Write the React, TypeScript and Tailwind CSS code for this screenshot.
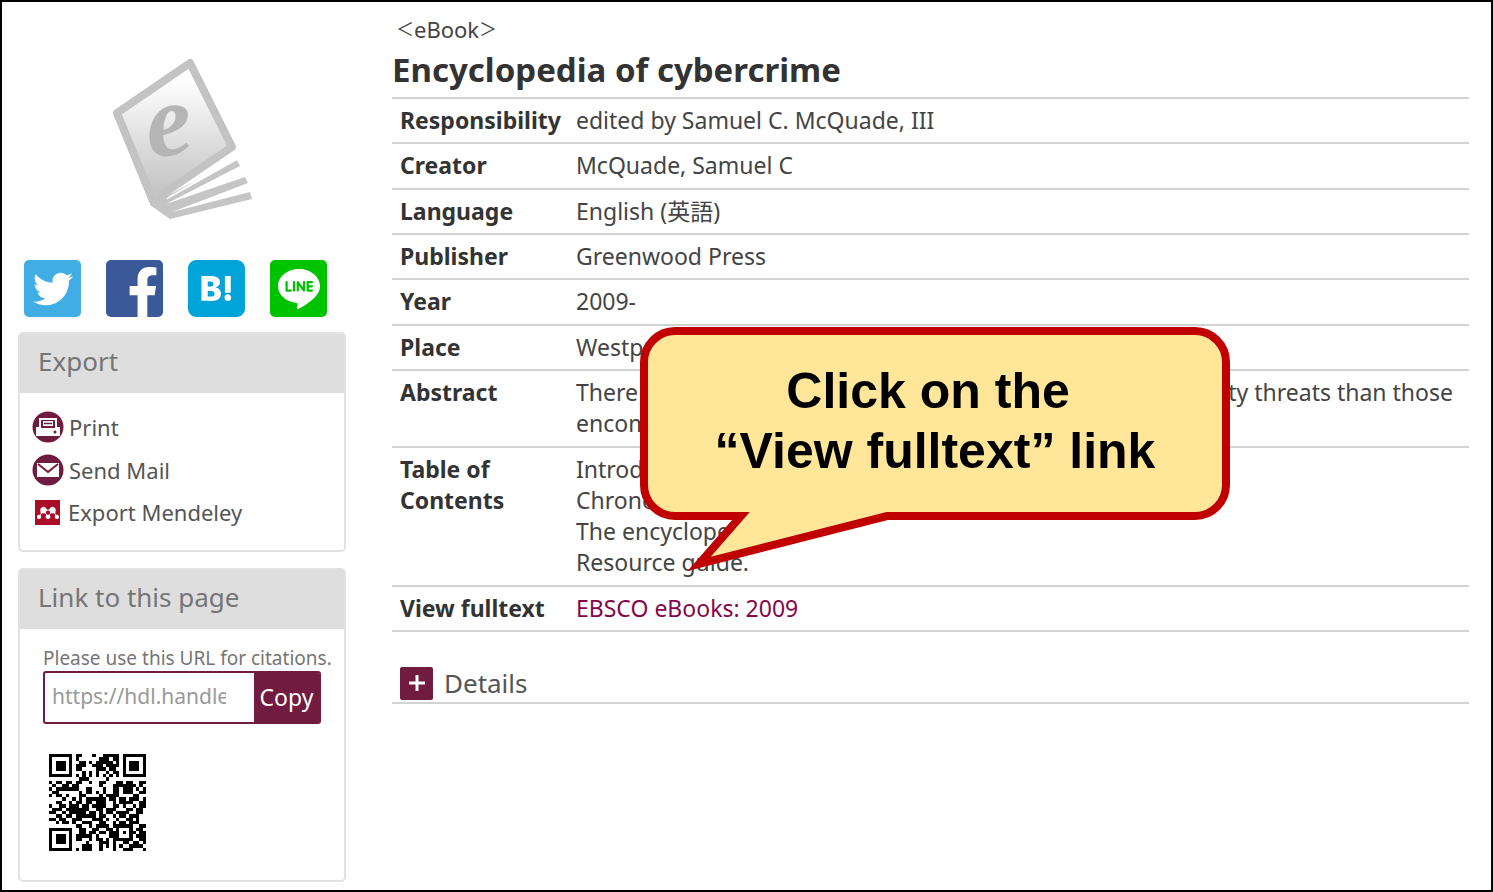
import { useState } from 'react';
import type { ReactNode } from 'react';
import { FaFacebookF, FaTwitter } from 'react-icons/fa';
import { SiHatenabookmark, SiLine, SiMendeley } from 'react-icons/si';

type Field = {
    label: string;
    value: ReactNode;
};

const fields: Field[] = [
    { label: 'Responsibility', value: 'edited by Samuel C. McQuade, III' },
    { label: 'Creator', value: 'McQuade, Samuel C' },
    { label: 'Language', value: 'English (英語)' },
    { label: 'Publisher', value: 'Greenwood Press' },
    { label: 'Year', value: '2009-' },
    { label: 'Place', value: 'Westport' },
    {
        label: 'Abstract',
        value: (
            <>
                <span className="flex justify-between">
                    <span>There are</span>
                    <span className="pr-2">security threats than those</span>
                </span>
                <span>encompassed</span>
            </>
        ),
    },
    {
        label: 'Table of Contents',
        value: (
            <>
                Introduction.<br />
                Chronology.<br />
                The encyclopedia.<br />
                Resource guide.
            </>
        ),
    },
    {
        label: 'View fulltext',
        value: <a href="#fulltext" className="text-[#85064a]">EBSCO eBooks: 2009</a>,
    },
];

const qrRows = [
    '11111110110001001111101111111',
    '10000010100000011101101000001',
    '10111010011010111110101011101',
    '10111010111001110111101011101',
    '10111010110000111011001011101',
    '10000010001010100101101000001',
    '11111110101010101010101111111',
    '00000000011100000100000000000',
    '10110110110010011000110110011',
    '01001101100000010001111111010',
    '10111111100110001001101110101',
    '01100000010110101001101110011',
    '10110100011000010111100001100',
    '00001001010111111011011011101',
    '00110010110110111001011110011',
    '10011011101101111001101001011',
    '01110111111100110111000110110',
    '11001011111011010110111100110',
    '00110110111111011001011011100',
    '11011001110001110100100110100',
    '00101101001110011001011011100',
    '00000000110010111101111110011',
    '11111110011001100110100010110',
    '10000010011011011011101011011',
    '10111010111110100011100010111',
    '10111010110010110101111110011',
    '10111010000100011101001101101',
    '10000010001110010101010011110',
    '11111110101110010001001110001',
];

function QrCode() {
    return (
        <svg viewBox="0 0 29 29" className="size-[97px]" shapeRendering="crispEdges" role="img" aria-label="QR code">
            {qrRows.map((row, y) =>
                row.split('').map((cell, x) =>
                    cell === '1' ? <rect key={`${x}-${y}`} x={x} y={y} width="1" height="1" /> : null
                )
            )}
        </svg>
    );
}

function BookCover() {
    return (
        <svg viewBox="0 0 190 200" className="h-[200px] w-[190px]" role="img" aria-label="eBook">
            <defs>
                <linearGradient id="cover" x1="0" y1="0" x2="0" y2="1">
                    <stop offset="0.15" stopColor="#fdfdfd" />
                    <stop offset="0.9" stopColor="#c6c6c6" />
                </linearGradient>
            </defs>
            <path
                d="M60 158L80 154L147 120L150 126L76 164L155 137L158 143L82 172L160 152L162 159L80 179L60 165Z"
                fill="#c5c5c5"
            />
            <path
                d="M27 73L100 23L142 107L73 154L63 161Z"
                fill="url(#cover)"
                stroke="#c3c3c3"
                strokeWidth="8"
                strokeLinejoin="round"
            />
            <path d="M78 157L147 117L149 119L76 160Z" fill="#fff" />
            <text
                x="56"
                y="115"
                fontSize="104"
                fontWeight="700"
                fontStyle="italic"
                fill="#b5b5b5"
                transform="rotate(-8 80 90)"
                className="font-['Liberation_Serif',serif]"
            >
                e
            </text>
        </svg>
    );
}

function PrintIcon() {
    return (
        <svg viewBox="0 0 32 32" className="size-8" aria-hidden="true">
            <circle cx="16" cy="16" r="15.5" fill="#701b3f" />
            <path d="M7 7h18v9h3v9H4v-9h3z" fill="#fff" />
            <path d="M9 9h14v8H9z" fill="#701b3f" />
            <path d="M11 10h10v5H11z" fill="#fff" />
            <path d="M12 12.500h8" stroke="#701b3f" strokeWidth="1.5" />
            <circle cx="23" cy="21" r="1.500" fill="#701b3f" />
        </svg>
    );
}

function MailIcon() {
    return (
        <svg viewBox="0 0 32 32" className="size-8" aria-hidden="true">
            <circle cx="16" cy="16" r="15.5" fill="#701b3f" />
            <path d="M5 9h22v14H5z" fill="#fff" />
            <path d="M6 10l10 8 10-8" fill="none" stroke="#701b3f" strokeWidth="2" />
        </svg>
    );
}

function Card({ title, children }: { title: string; children: ReactNode }) {
    return (
        <section className="rounded-[5px] border-2 border-[#e2e2e2] bg-white">
            <h2 className="bg-[#dedede] px-[18px] pt-[10px] pb-[15px] text-[26px] leading-[34px] text-[#757575]">{title}</h2>
            {children}
        </section>
    );
}

function Callout() {
    return (
        <div className="absolute top-[325px] left-[638px] h-[250px] w-[590px]">
            <svg viewBox="0 0 590 250" className="absolute inset-0 size-full overflow-visible" aria-hidden="true">
                <path
                    d="M35 4H555A31 31 0 0 1 586 35V158A31 31 0 0 1 555 189H247L59 237L101 189H35A31 31 0 0 1 4 158V35A31 31 0 0 1 35 4Z"
                    fill="#ffe699"
                    stroke="#c00000"
                    strokeWidth="8"
                    strokeMiterlimit="10"
                />
            </svg>
            <p className="relative pt-[34px] text-center font-['Liberation_Sans',sans-serif] text-[50px] leading-[60px] font-bold text-black">
                Click on the&nbsp;<br />
                “View fulltext” link
            </p>
        </div>
    );
}

export default function App() {
    const [open, setOpen] = useState(false);

    return (
        <div className="relative flex min-h-screen items-start border-2 border-black bg-white pr-[22px] pb-1 pl-4 font-['Noto_Sans','Noto_Sans_CJK_JP',sans-serif] text-[22px] leading-[31px] text-[#444]">
            {/* Sidebar */}
            <aside className="w-[328px] shrink-0">
                <div className="flex justify-center pt-[38px] pb-5 pl-[6px]">
                    <BookCover />
                </div>
                <div className="mb-[15px] flex gap-[25px] px-[6px]">
                    <a href="#twitter" aria-label="Twitter" className="flex size-[57px] items-center justify-center rounded-[5px] bg-[#40ade5]">
                        <FaTwitter className="size-10 text-white" />
                    </a>
                    <a href="#facebook" aria-label="Facebook" className="flex size-[57px] items-end justify-end overflow-hidden rounded-[5px] bg-[#3b5998] pr-1">
                        <FaFacebookF className="h-[50px] w-8 text-white" />
                    </a>
                    <a href="#hatena" aria-label="Hatena Bookmark" className="overflow-hidden rounded-[5px] bg-white">
                        <SiHatenabookmark className="size-[57px] text-[#00a4d8]" />
                    </a>
                    <a href="#line" aria-label="LINE" className="flex size-[57px] items-center justify-center rounded-[5px] bg-[#00c300]">
                        <SiLine className="size-[42px] text-white" />
                    </a>
                </div>

                <div className="flex flex-col gap-4">
                    <Card title="Export">
                        <ul className="flex flex-col gap-[11px] px-3 pt-[18px] pb-[22px] text-[#555]">
                            <li>
                                <a href="#print" className="flex items-center gap-[5px]"><PrintIcon />Print</a>
                            </li>
                            <li>
                                <a href="#mail" className="flex items-center gap-[5px]"><MailIcon />Send Mail</a>
                            </li>
                            <li>
                                <a href="#mendeley" className="flex items-center gap-2 pl-[3px]">
                                    <span className="flex size-[25px] items-center justify-center bg-[#ab0c28]">
                                        <SiMendeley className="size-[22px] text-white" />
                                    </span>
                                    Export Mendeley
                                </a>
                            </li>
                        </ul>
                    </Card>

                    <Card title="Link to this page">
                        <div className="pt-4 pr-[23px] pb-[29px] pl-[23px]">
                            <label htmlFor="citation-url" className="block text-[19px] leading-[26px] whitespace-nowrap text-[#757575]">
                                Please use this URL for citations.
                            </label>
                            <div className="flex h-[53px] overflow-hidden rounded-[3px] border-2 border-[#701b3f]">
                                <div className="min-w-0 flex-1 pr-7 pl-[7px]">
                                    <input
                                        id="citation-url"
                                        readOnly
                                        defaultValue="https://hdl.handle.net/2324/"
                                        className="h-full w-full bg-transparent pb-1 text-[21px] text-[#999] outline-none"
                                    />
                                </div>
                                <button className="w-[65px] bg-[#701b3f] text-[23px] text-white">Copy</button>
                            </div>
                            <div className="pt-[30px] pl-[6px]">
                                <QrCode />
                            </div>
                        </div>
                    </Card>
                </div>
            </aside>

            {/* Bibliographic record */}
            <main className="ml-[46px] min-w-0 flex-1 pt-3">
                <p className="flex items-center pl-1">
                    <span className="text-[18px]">＜</span>eBook<span className="text-[18px]">＞</span>
                </p>
                <h1 className="pt-1 pb-[6px] text-[33px] leading-[42px] font-bold text-[#333]">Encyclopedia of cybercrime</h1>
                <table className="h-[535px] w-full table-fixed border-b-2 border-[#d2d2d2] text-[23px] leading-[31px]">
                    <tbody>
                        {fields.map((field) => (
                            <tr key={field.label} className="border-t-2 border-[#d2d2d2] align-top">
                                <th scope="row" className="w-[176px] py-[6px] pl-2 text-left font-bold text-[#333]">
                                    {field.label}
                                </th>
                                <td className="py-[6px] pr-2 pl-2">{field.value}</td>
                            </tr>
                        ))}
                    </tbody>
                </table>
                <button
                    onClick={() => setOpen(!open)}
                    aria-expanded={open}
                    className="mt-[34px] flex w-full items-center gap-[11px] border-b-2 border-[#d2d2d2] px-2 pb-[2px] text-[26px] leading-[34px] text-[#555]"
                >
                    <span className="flex size-[33px] items-center justify-center rounded-[2px] bg-[#701b3f]">
                        <svg viewBox="0 0 16 16" className="size-4" aria-hidden="true">
                            <path d="M8 0v16M0 8h16" stroke="#fff" strokeWidth="3" />
                        </svg>
                    </span>
                    Details
                </button>
            </main>

            <Callout />
        </div>
    );
}
